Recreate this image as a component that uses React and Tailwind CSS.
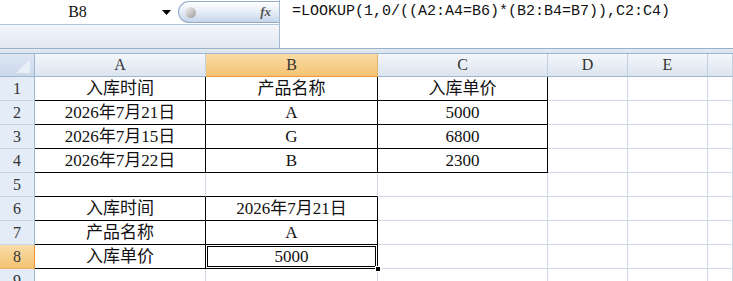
import React from 'react';

const columns = ['A', 'B', 'C', 'D', 'E', ''];

const rows = [
  ['入库时间', '产品名称', '入库单价'],
  ['2026年7月21日', 'A', '5000'],
  ['2026年7月15日', 'G', '6800'],
  ['2026年7月22日', 'B', '2300'],
  ['', '', ''],
  ['入库时间', '2026年7月21日', ''],
  ['产品名称', 'A', ''],
  ['入库单价', '5000', ''],
  ['', '', ''],
];

// black borders for A1:C4 and A6:B8
const rightBlack = (r, c) => (r <= 4 && c <= 2) || (r >= 6 && r <= 8 && c <= 1);
const bottomBlack = (r, c) => (r <= 4 && c <= 2) || (r >= 5 && r <= 8 && c <= 1);

const FormulaBar = () => (
  <div className="flex h-[49px] border-b border-[#9aaec8]">
    <div className="flex w-[280px] flex-col border-r border-[#a7b9cf]">
      <div className="flex h-[25px] items-center border-b border-[#b4c4d8] bg-white">
        <div className="flex w-[155px] justify-center text-[16px] text-[#111]">B8</div>
        <svg width="9" height="5" viewBox="0 0 9 5" className="ml-[7px]">
          <path d="M0 0 L9 0 L4.5 5 Z" fill="#000" />
        </svg>
        <div className="ml-[7px] flex h-[22px] flex-1 items-center rounded-l-full border border-r-0 border-[#93a9c6] bg-gradient-to-b from-white via-[#e6edf7] to-[#c6d5ea] pl-[6px] pr-[8px]">
          <div className="h-[11px] w-[11px] rounded-full bg-gradient-to-br from-[#f4f4f4] via-[#c9c9c9] to-[#9a9a9a]" />
          <span className="ml-auto text-[13px] font-bold italic text-[#555]">fx</span>
        </div>
      </div>
      <div className="flex-1 bg-gradient-to-b from-[#f2f5fa] to-[#e2e9f3]" />
    </div>
    <div className="flex-1 bg-white pl-[12px]">
      <div className="flex h-[25px] items-center font-['Liberation_Mono',monospace] text-[15px] text-[#111]">
        =LOOKUP(1,0/((A2:A4=B6)*(B2:B4=B7)),C2:C4)
      </div>
    </div>
  </div>
);

const App = () => {
  return (
    <div className="h-[281px] w-[733px] overflow-hidden bg-white font-['Liberation_Serif','Noto_Sans_CJK_SC',serif]">
      <FormulaBar />
      <div className="h-[4px] bg-gradient-to-b from-[#e4ebf4] to-[#d9e2ee]" />
      <div className="grid grid-cols-[35px_171px_172px_170px_80px_80px_1fr] border-t border-[#9eb6ce]">
        <div className="relative h-[23px] border-b border-r border-[#9eb6ce] bg-gradient-to-b from-[#dde6f3] to-[#cbd8ea]">
          <svg width="14" height="14" viewBox="0 0 14 14" className="absolute bottom-[3px] right-[4px]">
            <path d="M14 0 L14 14 L0 14 Z" fill="#e9eff7" />
          </svg>
        </div>
        {columns.map((col, c) => (
          <div
            key={col + c}
            className={
              c === 1
                ? 'flex h-[23px] items-center justify-center border-b border-r border-b-[#f29536] border-r-[#e6b36a] bg-gradient-to-b from-[#f9dca6] to-[#f3c372] text-[16px] text-[#333]'
                : 'flex h-[23px] items-center justify-center border-b border-r border-b-[#9eb6ce] border-r-[#c3d0e0] bg-gradient-to-b from-[#f4f7fb] to-[#dbe4f0] text-[16px] text-[#333]'
            }
          >
            {col}
          </div>
        ))}
        {rows.map((row, i) => {
          const r = i + 1;
          return (
            <React.Fragment key={r}>
              <div
                className={
                  r === 8
                    ? 'flex h-[24px] items-center justify-center border-b border-r border-b-[#e6b36a] border-r-[#f29536] bg-gradient-to-b from-[#f9dca6] to-[#f3c372] text-[16px] text-[#333]'
                    : 'flex h-[24px] items-center justify-center border-b border-r border-b-[#c5d3e4] border-r-[#9eb6ce] bg-[#e4ecf7] text-[16px] text-[#333]'
                }
              >
                {r}
              </div>
              {columns.map((_, c) => {
                const value = c <= 2 ? row[c] : '';
                const selected = r === 8 && c === 1;
                return (
                  <div
                    key={c}
                    className={`relative flex h-[24px] items-center justify-center whitespace-nowrap border-b border-r pt-[1px] text-[17px] text-[#111] ${
                      rightBlack(r, c) ? 'border-r-black' : 'border-r-[#d0d7e5]'
                    } ${bottomBlack(r, c) ? 'border-b-black' : 'border-b-[#d0d7e5]'}`}
                  >
                    {value}
                    {selected && (
                      <>
                        <div className="absolute inset-[1px] border border-black" />
                        <div className="absolute -bottom-[4px] -right-[4px] z-10 h-[6px] w-[6px] border border-white bg-black" />
                      </>
                    )}
                  </div>
                );
              })}
            </React.Fragment>
          );
        })}
      </div>
    </div>
  );
};

export default App;
